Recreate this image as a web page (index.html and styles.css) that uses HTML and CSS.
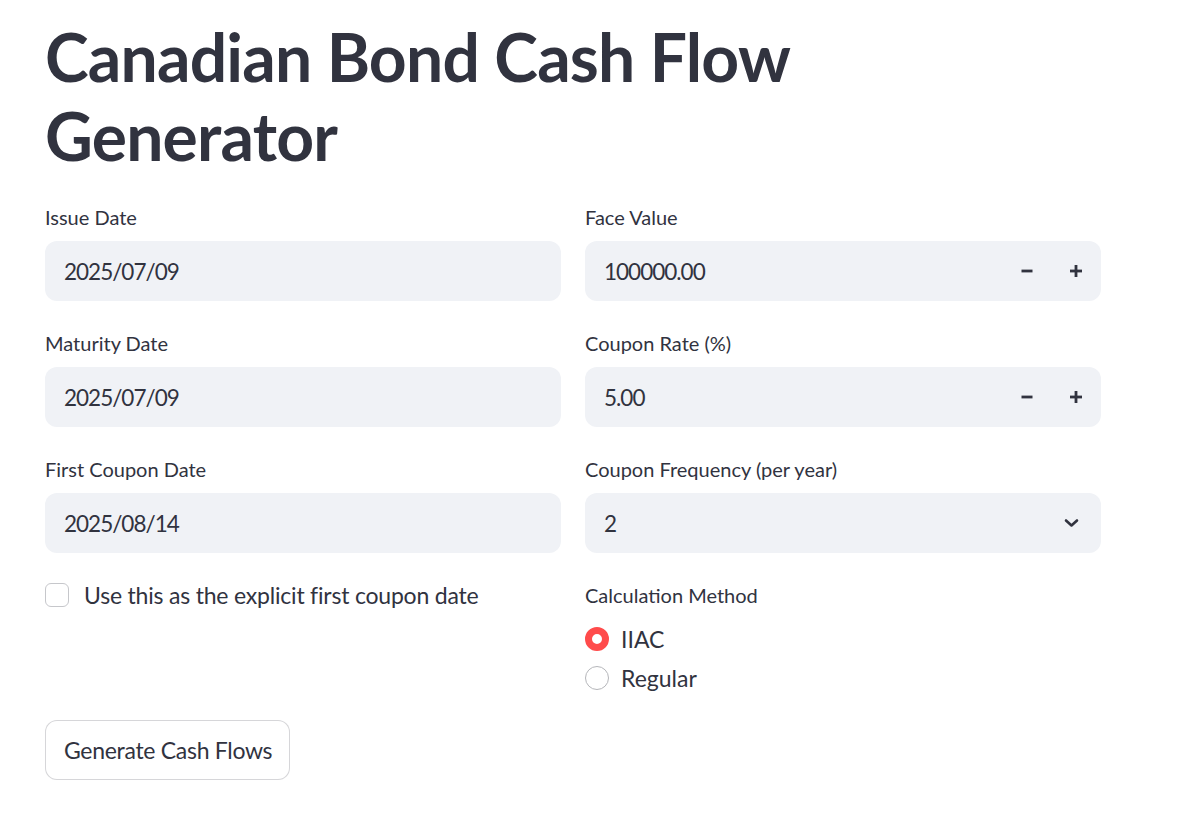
FILE: index.html
```html
<!DOCTYPE html>
<html lang="en">
<head>
<meta charset="utf-8">
<title>Canadian Bond Cash Flow Generator</title>
<link rel="stylesheet" href="styles.css">
</head>
<body>
<main class="page">
  <h1 class="title">Canadian Bond Cash Flow Generator</h1>
  <div class="columns">
    <div class="col">
      <div class="field">
        <label class="label">Issue Date</label>
        <div class="input"><span class="value">2025/07/09</span></div>
      </div>
      <div class="field">
        <label class="label">Maturity Date</label>
        <div class="input"><span class="value">2025/07/09</span></div>
      </div>
      <div class="field">
        <label class="label">First Coupon Date</label>
        <div class="input"><span class="value">2025/08/14</span></div>
      </div>
      <div class="check-row">
        <span class="checkbox"></span>
        <span class="check-text">Use this as the explicit first coupon date</span>
      </div>
    </div>
    <div class="col">
      <div class="field">
        <label class="label">Face Value</label>
        <div class="input number">
          <span class="value grow">100000.00</span>
          <span class="step"><svg width="14" height="14" viewBox="0 0 14 14"><rect x="1.5" y="5.6" width="11" height="2.8" fill="#31333F"/></svg></span>
          <span class="step"><svg width="14" height="14" viewBox="0 0 14 14"><rect x="1" y="5.6" width="12" height="2.8" fill="#31333F"/><rect x="5.6" y="1" width="2.8" height="12" fill="#31333F"/></svg></span>
        </div>
      </div>
      <div class="field">
        <label class="label">Coupon Rate (%)</label>
        <div class="input number">
          <span class="value grow">5.00</span>
          <span class="step"><svg width="14" height="14" viewBox="0 0 14 14"><rect x="1.5" y="5.6" width="11" height="2.8" fill="#31333F"/></svg></span>
          <span class="step"><svg width="14" height="14" viewBox="0 0 14 14"><rect x="1" y="5.6" width="12" height="2.8" fill="#31333F"/><rect x="5.6" y="1" width="2.8" height="12" fill="#31333F"/></svg></span>
        </div>
      </div>
      <div class="field">
        <label class="label">Coupon Frequency (per year)</label>
        <div class="input select">
          <span class="value grow">2</span>
          <span class="chevron"><svg width="18" height="18" viewBox="0 0 18 18"><path d="M3 6.5 L8.5 11.5 L14 6.5" fill="none" stroke="#31333F" stroke-width="2.6" stroke-linecap="round" stroke-linejoin="round"/></svg></span>
        </div>
      </div>
      <div class="radio-group">
        <label class="label">Calculation Method</label>
        <div class="radio-row"><span class="radio on"></span><span class="radio-text">IIAC</span></div>
        <div class="radio-row"><span class="radio"></span><span class="radio-text">Regular</span></div>
      </div>
    </div>
  </div>
  <button class="btn">Generate Cash Flows</button>
</main>
</body>
</html>
```

FILE: styles.css
```css
* { box-sizing: border-box; }
html, body { margin: 0; padding: 0; background: #ffffff; }
body {
  font-family: "Lato", "Noto Sans", "Liberation Sans", sans-serif;
  color: #31333F;
}
.page {
  width: 1056px;
  margin-left: 45px;
  padding-top: 17px;
  padding-bottom: 40px;
}
.title {
  margin: 0;
  font-size: 66px;
  font-weight: 700;
  line-height: 79px;
  letter-spacing: -0.8px;
  width: 780px;
  color: #31333F;
}
.columns {
  margin-top: 24px;
  display: grid;
  grid-template-columns: 516px 516px;
  column-gap: 24px;
  align-items: start;
}
.col {
  display: flex;
  flex-direction: column;
  gap: 24px;
}
.field {
  display: flex;
  flex-direction: column;
}
.label {
  display: flex;
  align-items: center;
  height: 36px;
  margin-bottom: 6px;
  font-size: 20px;
  line-height: 1;
  color: #31333F;
}
.input {
  height: 60px;
  border-radius: 12px;
  background: #f0f2f6;
  display: flex;
  align-items: center;
  padding-left: 19px;
}
.value {
  font-size: 22.5px;
  letter-spacing: -1px;
  color: #31333F;
}
.grow { flex: 1; }
.number { padding-right: 0; }
.step {
  width: 48px;
  height: 60px;
  display: flex;
  align-items: center;
  justify-content: center;
}
.step:last-child { width: 50px; }
.select { padding-right: 20px; }
.chevron { display: flex; align-items: center; }
.check-row {
  height: 36px;
  display: flex;
  align-items: center;
  gap: 15px;
}
.checkbox {
  width: 24px;
  height: 24px;
  border: 1.5px solid #c6c7cb;
  border-radius: 6px;
  background: #fff;
}
.check-text { font-size: 23px; letter-spacing: -0.2px; }
.radio-group {
  display: flex;
  flex-direction: column;
}
.radio-row {
  height: 39px;
  display: flex;
  align-items: center;
  gap: 12px;
}
.radio {
  width: 24px;
  height: 24px;
  border-radius: 50%;
  border: 1.5px solid #b5b6ba;
  background: #fff;
}
.radio.on {
  border: 7.5px solid #ff4b4b;
  background: #ffffff;
}
.radio-text { font-size: 23px; }
.btn {
  margin-top: 23px;
  height: 60px;
  width: 245px;
  padding: 0 18px;
  border: 1px solid rgba(49, 51, 63, 0.2);
  border-radius: 12px;
  background: #ffffff;
  font-family: inherit;
  font-size: 23px;
  letter-spacing: -0.3px;
  color: #31333F;
  text-align: left;
  white-space: nowrap;
}
```
